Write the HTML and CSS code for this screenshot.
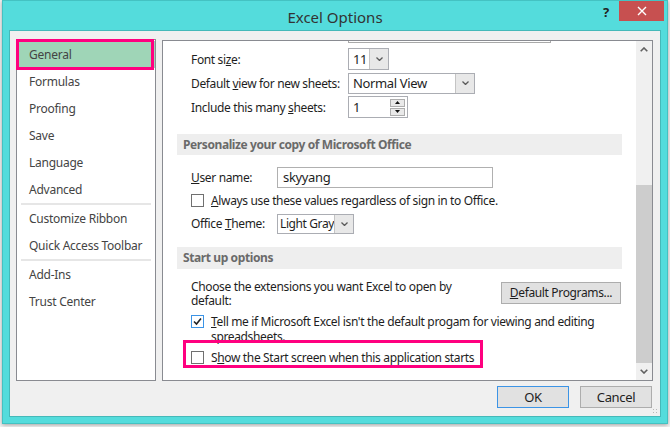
FILE: index.html
```html
<html>
<head>
    <meta charset="utf-8" />
    <title>Excel Options</title>
    <link rel="stylesheet" href="styles.css">
</head>
<body>
    <div class="window">
        <div class="titlebar">
            <span class="spacer"></span>
            <span class="title">Excel Options</span>
            <div class="caption-buttons">
                <span class="help">?</span>
                <span class="close">
                    <svg width="10" height="10" viewBox="0 0 10 10"><path d="M1 1 L9 9 M9 1 L1 9" stroke="#fff" stroke-width="1.4" fill="none"/></svg>
                </span>
            </div>
        </div>
        <div class="client">
            <div class="panes">
                <ul class="nav">
                    <li class="selected">General</li>
                    <li>Formulas</li>
                    <li>Proofing</li>
                    <li>Save</li>
                    <li>Language</li>
                    <li>Advanced</li>
                    <li class="sep"></li>
                    <li>Customize Ribbon</li>
                    <li>Quick Access Toolbar</li>
                    <li class="sep"></li>
                    <li>Add-Ins</li>
                    <li>Trust Center</li>
                    <span class="mark mark-nav"></span>
                </ul>
                <div class="options">
                    <div class="scroll-area">
                        <div class="partial-box"></div>
                        <div class="field">
                            <span class="label">Font si<u>z</u>e:</span>
                            <span class="combo combo-size"><span class="value">11</span><span class="arrow"><svg width="7" height="4" viewBox="0 0 7 4"><path d="M0.5 0.5 L3.5 3.5 L6.5 0.5" fill="none" stroke="#5a5a5a" stroke-width="1.3"/></svg></span></span>
                        </div>
                        <div class="field">
                            <span class="label">Default <u>v</u>iew for new sheets:</span>
                            <span class="combo combo-view"><span class="value">Normal View</span><span class="arrow"><svg width="7" height="4" viewBox="0 0 7 4"><path d="M0.5 0.5 L3.5 3.5 L6.5 0.5" fill="none" stroke="#5a5a5a" stroke-width="1.3"/></svg></span></span>
                        </div>
                        <div class="field">
                            <span class="label">Include this many <u>s</u>heets:</span>
                            <span class="spin"><span class="value">1</span><span class="spin-buttons"><span class="spin-btn"><svg width="5" height="3" viewBox="0 0 5 3"><path d="M0 3 L2.5 0 L5 3 Z" fill="#111"/></svg></span><span class="spin-btn"><svg width="5" height="3" viewBox="0 0 5 3"><path d="M0 0 L2.5 3 L5 0 Z" fill="#111"/></svg></span></span></span>
                        </div>

                        <div class="section">Personalize your copy of Microsoft Office</div>
                        <div class="group">
                            <div class="field field-user">
                                <span class="label short"><u>U</u>ser name:</span>
                                <span class="textbox">skyyang</span>
                            </div>
                            <div class="field field-check">
                                <span class="checkbox"></span>
                                <span><u>A</u>lways use these values regardless of sign in to Office.</span>
                            </div>
                            <div class="field field-check">
                                <span class="label short">Office <u>T</u>heme:</span>
                                <span class="combo combo-theme"><span class="value">Light Gray</span><span class="arrow"><svg width="7" height="4" viewBox="0 0 7 4"><path d="M0.5 0.5 L3.5 3.5 L6.5 0.5" fill="none" stroke="#5a5a5a" stroke-width="1.3"/></svg></span></span>
                            </div>
                        </div>

                        <div class="section section-start">Start up options</div>
                        <div class="choose">
                            <span class="choose-text">Choose the extensions you want Excel to open by default:</span>
                            <span class="btn btn-wide"><u>D</u>efault Programs...</span>
                        </div>
                        <div class="check-row">
                            <span class="checkbox checked"><svg width="11" height="11" viewBox="0 0 11 11"><path d="M2 5.5 L4.5 8 L9 2.5" fill="none" stroke="#222" stroke-width="1.6"/></svg></span>
                            <span class="check-text"><u>T</u>ell me if Microsoft Excel isn't the default progam for viewing and editing spreadsheets.</span>
                        </div>
                        <div class="check-row check-start">
                            <span class="checkbox"></span>
                            <span class="check-text">S<u>h</u>ow the Start screen when this application starts</span>
                        </div>
                        <span class="mark mark-start"></span>
                    </div>
                    <div class="scrollbar">
                        <span class="sb-btn"><svg width="8" height="5" viewBox="0 0 8 5"><path d="M0.7 4.3 L4 1 L7.3 4.3" fill="none" stroke="#606060" stroke-width="1.6"/></svg></span>
                        <div class="sb-track"><div class="sb-thumb"></div></div>
                        <span class="sb-btn"><svg width="8" height="5" viewBox="0 0 8 5"><path d="M0.7 0.7 L4 4 L7.3 0.7" fill="none" stroke="#606060" stroke-width="1.6"/></svg></span>
                    </div>
                </div>
            </div>
            <div class="footer">
                <span class="btn btn-default">OK</span>
                <span class="btn">Cancel</span>
            </div>
            <span class="grip"></span>
        </div>
    </div>
</body>
</html>
```

FILE: styles.css
```css
html, body {
    margin: 0;
    background-color: #f4f4f4;
    font-family: "Noto Sans", "Open Sans", sans-serif;
    font-size: 12px;
    letter-spacing: -0.35px;
    color: #1e1e1e;
}
.window {
    box-sizing: border-box;
    margin-left: 2px;
    width: 666px;
    height: 424px;
    background-color: #54dcdc;
    border: 1px solid #44c2c2;
    box-shadow: 0 1px 4px rgba(0, 0, 0, 0.35);
    display: flex;
    flex-direction: column;
}
.titlebar {
    height: 29px;
    display: flex;
    flex-direction: row;
}
.titlebar .spacer {
    width: 74px;
}
.title {
    flex: 1;
    text-align: center;
    font-size: 15px;
    letter-spacing: 0;
    line-height: 28px;
    padding-top: 2px;
    color: #333;
}
.caption-buttons {
    width: 74px;
    display: flex;
    flex-direction: row;
    align-items: flex-start;
}
.help {
    width: 26px;
    text-align: center;
    font-size: 13px;
    font-weight: bold;
    line-height: 22px;
    color: #222;
}
.close {
    width: 45px;
    height: 20px;
    background-color: #c75050;
    display: flex;
    align-items: center;
    justify-content: center;
}
.client {
    position: relative;
    flex: 1;
    margin: 0 6px 6px 6px;
    border: 1px solid #45b9b9;
    background-color: #f0f0f0;
    padding: 8px 7px 0 6px;
    display: flex;
    flex-direction: column;
}
.panes {
    height: 342px;
    display: flex;
    flex-direction: row;
    gap: 6px;
}
.nav {
    position: relative;
    box-sizing: border-box;
    width: 140px;
    margin: 0;
    padding: 1px 0;
    list-style: none;
    background-color: #fff;
    border: 1px solid #898b91;
    color: #444;
    letter-spacing: -0.25px;
}
.nav li {
    height: 27px;
    line-height: 27px;
    padding-left: 12px;
}
.nav li.selected {
    background-color: #9fd5b7;
}
.nav li.sep {
    height: 2px;
    padding: 0;
    margin: 0 4px;
    background-color: #e6e6e6;
}
.mark {
    position: absolute;
    box-sizing: border-box;
    border: 3px solid #ff007f;
}
.mark-nav {
    left: -1px;
    top: -1px;
    width: 138px;
    height: 31px;
}
.mark-start {
    left: 20px;
    top: 299px;
    width: 300px;
    height: 28px;
}
.options {
    box-sizing: border-box;
    flex: 1;
    margin-top: 1px;
    background-color: #fff;
    border: 1px solid #898b91;
    display: flex;
    flex-direction: row;
}
.scroll-area {
    position: relative;
    flex: 1;
    overflow: hidden;
}
.partial-box {
    margin-left: 185px;
    width: 201px;
    height: 1px;
    border: 1px solid #a9a9a9;
    border-top: none;
}
.field {
    display: flex;
    flex-direction: row;
    align-items: center;
    height: 24px;
    padding-left: 28px;
    white-space: nowrap;
}
.partial-box + .field {
    margin-top: 4px;
}
.label {
    width: 157px;
}
.label.short {
    width: 86px;
}
.combo, .spin, .textbox {
    box-sizing: border-box;
    display: flex;
    flex-direction: row;
    align-items: center;
    height: 22px;
    border: 1px solid #abadb3;
    background-color: #fff;
}
.combo .value, .spin .value {
    flex: 1;
    padding-left: 4px;
}
.combo .arrow {
    box-sizing: border-box;
    width: 19px;
    align-self: stretch;
    background-color: #e8e8e8;
    border-left: 1px solid #c4c4c4;
    display: flex;
    align-items: center;
    justify-content: center;
}
.combo-size {
    width: 41px;
    font-size: 13px;
}
.combo-view {
    width: 127px;
    height: 21px;
    font-size: 13px;
}
.combo-theme {
    width: 77px;
    height: 20px;
}
.combo-theme .value {
    padding-left: 2px;
    letter-spacing: -0.4px;
}
.spin {
    width: 60px;
    font-size: 13px;
}
.spin-buttons {
    display: flex;
    flex-direction: column;
    gap: 1px;
    margin-right: 2px;
}
.spin-btn {
    box-sizing: border-box;
    width: 15px;
    height: 8px;
    border: 1px solid #adadad;
    background-color: #e9e9e9;
    display: flex;
    align-items: center;
    justify-content: center;
}
.section {
    margin: 15px 14px 0 14px;
    height: 21px;
    line-height: 21px;
    padding-left: 6px;
    background-color: #eeeeee;
    color: #6a6a6a;
    font-weight: bold;
    letter-spacing: -0.4px;
}
.group {
    margin-top: 10px;
}
.field-check {
    height: 23px;
}
.textbox {
    width: 216px;
    height: 21px;
    padding-left: 5px;
    border-color: #b0b0b0;
    font-size: 13px;
}
.checkbox {
    box-sizing: border-box;
    flex: none;
    width: 13px;
    height: 13px;
    margin-right: 7px;
    border: 1px solid #707070;
    background-color: #fff;
    display: flex;
    align-items: center;
    justify-content: center;
}
.checkbox.checked {
    border-color: #3c94e6;
}
.section-start {
    margin-top: 12px;
    height: 22px;
    line-height: 22px;
}
.choose {
    margin-top: 11px;
    padding-left: 28px;
    padding-right: 15px;
    display: flex;
    flex-direction: row;
    justify-content: space-between;
    align-items: flex-start;
}
.choose-text {
    width: 270px;
    line-height: 14px;
}
.btn {
    box-sizing: border-box;
    width: 72px;
    height: 22px;
    line-height: 20px;
    text-align: center;
    border: 1px solid #adadad;
    background-color: #e1e1e1;
    font-size: 13px;
}
.btn-wide {
    width: 120px;
    margin-top: 2px;
    font-size: 12px;
}
.btn-default {
    border-color: #3c94e6;
}
.check-row {
    margin-top: 6px;
    padding-left: 28px;
    padding-right: 14px;
    display: flex;
    flex-direction: row;
    align-items: flex-start;
    line-height: 15px;
}
.check-row .checkbox {
    margin-top: 1px;
}
.check-start {
    margin-top: 6px;
}
.scrollbar {
    width: 16px;
    background-color: #f0f0f0;
    display: flex;
    flex-direction: column;
}
.sb-btn {
    height: 17px;
    display: flex;
    align-items: center;
    justify-content: center;
}
.sb-track {
    flex: 1;
}
.sb-thumb {
    margin-top: 127px;
    height: 178px;
    background-color: #cdcdcd;
}
.footer {
    margin-top: 5px;
    display: flex;
    flex-direction: row;
    justify-content: flex-end;
    gap: 11px;
    padding-right: 1px;
}
.grip {
    position: absolute;
    right: 1px;
    bottom: 1px;
    width: 7px;
    height: 7px;
    background-image: radial-gradient(circle, #b8b8b8 1px, transparent 1px);
    background-size: 3px 3px;
}
```
